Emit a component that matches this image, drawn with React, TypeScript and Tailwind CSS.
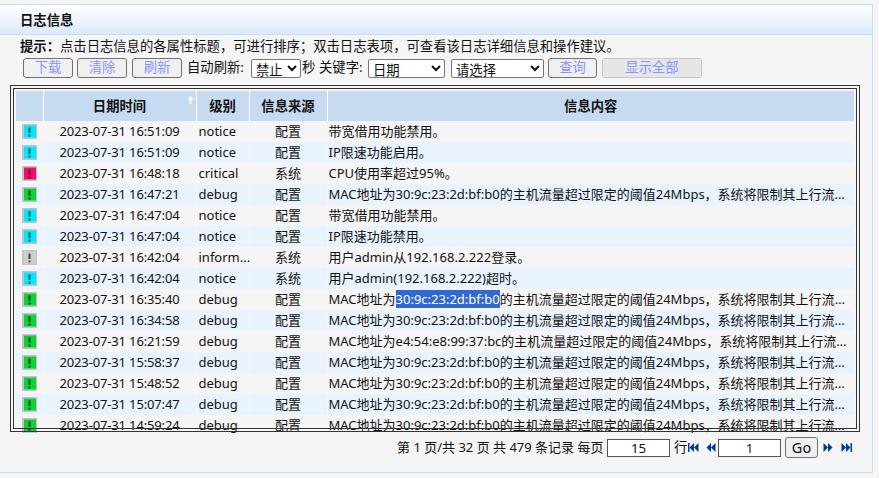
type Level = "notice" | "critical" | "debug" | "inform...";

const tileColors: Record<Level, { fill: string; mark: string }> = {
  notice: { fill: "#00e8fc", mark: "#04506a" },
  critical: { fill: "#f0106c", mark: "#66002e" },
  debug: { fill: "#10d038", mark: "#004a10" },
  "inform...": { fill: "#cfcfcf", mark: "#444444" },
};

const bw = "带宽借用功能禁用。";
const mac = (m: string) => `MAC地址为${m}的主机流量超过限定的阈值24Mbps，系统将限制其上行流量，并记录相关日志信息`;
const addr = "30:9c:23:2d:bf:b0";

const rows: { time: string; level: Level; source: string; text: string; sel?: boolean }[] = [
  { time: "2023-07-31 16:51:09", level: "notice", source: "配置", text: bw },
  { time: "2023-07-31 16:51:09", level: "notice", source: "配置", text: "IP限速功能启用。" },
  { time: "2023-07-31 16:48:18", level: "critical", source: "系统", text: "CPU使用率超过95%。" },
  { time: "2023-07-31 16:47:21", level: "debug", source: "配置", text: mac(addr) },
  { time: "2023-07-31 16:47:04", level: "notice", source: "配置", text: bw },
  { time: "2023-07-31 16:47:04", level: "notice", source: "配置", text: "IP限速功能禁用。" },
  { time: "2023-07-31 16:42:04", level: "inform...", source: "系统", text: "用户admin从192.168.2.222登录。" },
  { time: "2023-07-31 16:42:04", level: "notice", source: "系统", text: "用户admin(192.168.2.222)超时。" },
  { time: "2023-07-31 16:35:40", level: "debug", source: "配置", text: mac(addr), sel: true },
  { time: "2023-07-31 16:34:58", level: "debug", source: "配置", text: mac(addr) },
  { time: "2023-07-31 16:21:59", level: "debug", source: "配置", text: mac("e4:54:e8:99:37:bc") },
  { time: "2023-07-31 15:58:37", level: "debug", source: "配置", text: mac(addr) },
  { time: "2023-07-31 15:48:52", level: "debug", source: "配置", text: mac(addr) },
  { time: "2023-07-31 15:07:47", level: "debug", source: "配置", text: mac(addr) },
  { time: "2023-07-31 14:59:24", level: "debug", source: "配置", text: mac(addr) },
];

function LevelTile({ level }: { level: Level }) {
  const c = tileColors[level];
  return (
    <svg width="15" height="15" viewBox="0 0 15 15" className="block">
      <rect width="15" height="15" fill="#c4c4c4" />
      <rect x="2" y="1.5" width="12" height="12" fill={c.fill} />
      <rect x="6.5" y="3.5" width="2" height="5.5" fill={c.mark} />
      <rect x="6.5" y="10.5" width="2" height="2" fill={c.mark} />
    </svg>
  );
}

function ToolButton({ label, width, disabled }: { label: string; width: string; disabled?: boolean }) {
  return (
    <button
      className={`${width} h-[20px] rounded-[3px] border text-[#8496ff] ${
        disabled ? "border-[#c8c8c8] bg-[#e6e6e6]" : "border-[#707070] bg-[#f0f0f0]"
      }`}
    >
      {label}
    </button>
  );
}

function PagerArrow({ dir, bar }: { dir: "left" | "right"; bar?: boolean }) {
  return (
    <svg width="11" height="11" viewBox="0 0 11 11" className="block">
      {dir === "left" ? (
        <g fill="#003a9e">
          {bar && <rect x="0" y="1" width="1.5" height="9" />}
          <path d="M6 1v9L1.5 5.5zM10.5 1v9L6 5.5z" />
        </g>
      ) : (
        <g fill="#003a9e">
          <path d="M.5 1v9L5 5.5zM5 1v9l4.5-4.5z" />
          {bar && <rect x="9.5" y="1" width="1.5" height="9" />}
        </g>
      )}
    </svg>
  );
}

export default function App() {
  return (
    <div
      className="h-[478px] w-[879px] overflow-hidden bg-[#f5f5f5] pt-[4px] text-[13.33px] text-[#111]"
      style={{ fontFamily: '"Noto Sans", "Noto Sans CJK SC", sans-serif' }}
    >
      <div className="h-[469px] w-[873px] border-y border-r border-[#c4def5]">
        <div className="flex h-[30px] items-center border-b border-[#c4def5] bg-gradient-to-b from-[#ffffff] to-[#dce9fb] pl-[20px] pt-[2px] font-bold leading-none">
          日志信息
        </div>

        <p className="ml-[20px] mt-[1px] h-[20px] leading-[20px]">
          <b>提示：</b>点击日志信息的各属性标题，可进行排序；双击日志表项，可查看该日志详细信息和操作建议。
        </p>

        <div className="ml-[23px] mt-[2px] flex h-[20px] items-center leading-none">
          <ToolButton label="下载" width="w-[50px]" />
          <div className="ml-[4px]">
            <ToolButton label="清除" width="w-[50px]" />
          </div>
          <div className="ml-[5px]">
            <ToolButton label="刷新" width="w-[50px]" />
          </div>
          <span className="ml-[5px] w-[64px]">自动刷新:</span>
          <select className="h-[19px] w-[50px] rounded-[2px] border border-[#767676] bg-white">
            <option>禁止</option>
          </select>
          <span className="ml-[1px] w-[17px]">秒</span>
          <span className="w-[49px]">关键字:</span>
          <select className="h-[19px] w-[77px] rounded-[2px] border border-[#767676] bg-white">
            <option>日期</option>
          </select>
          <select className="ml-[6px] h-[19px] w-[93px] rounded-[2px] border border-[#767676] bg-white">
            <option>请选择</option>
          </select>
          <div className="ml-[4px]">
            <ToolButton label="查询" width="w-[49px]" />
          </div>
          <div className="ml-[5px]">
            <ToolButton label="显示全部" width="w-[100px]" disabled />
          </div>
        </div>

        <div className="relative ml-[16px] mt-[13px] h-[343px] w-[838px]">
          <div className="h-full overflow-hidden">
            <table className="w-[838px] table-fixed border-collapse">
              <colgroup>
                <col className="w-[27px]" />
                <col className="w-[153px]" />
                <col className="w-[53px]" />
                <col className="w-[78px]" />
                <col />
              </colgroup>
              <thead>
                <tr className="h-[30px] bg-[#c6dbf0] font-bold">
                  <th className="border-r border-white" />
                  <th className="relative border-r border-white pt-[1px]">
                    日期时间
                    <svg width="7" height="8" viewBox="0 0 7 8" className="absolute right-[2px] top-[5px]">
                      <path d="M3.5 0L6.5 3.5H4.3V8H2.7V3.5H.5z" fill="#fff" />
                    </svg>
                  </th>
                  <th className="border-r border-white pt-[1px]">级别</th>
                  <th className="border-r border-white pt-[1px]">信息来源</th>
                  <th className="pt-[1px]">信息内容</th>
                </tr>
              </thead>
              <tbody className="text-[13px]">
                {rows.map((r, i) => (
                  <tr key={i} className={`h-[21px] ${i % 2 === 1 ? "bg-[#e8f3fe]" : ""}`}>
                    <td className="border-r border-[#f5f5f5] p-0 pl-[6px]">
                      <LevelTile level={r.level} />
                    </td>
                    <td className="border-r border-[#f5f5f5] p-0 text-center tracking-[-0.15px]">{r.time}</td>
                    <td className="border-r border-[#f5f5f5] p-0 pl-[2px]">{r.level}</td>
                    <td className="border-r border-[#f5f5f5] p-0 text-center">{r.source}</td>
                    <td className="truncate p-0 pl-[1px] pr-[5px]">
                      {r.sel ? (
                        <>
                          MAC地址为<span className="bg-[#3367d1] text-white">{addr}</span>
                          {r.text.slice(6 + addr.length)}
                        </>
                      ) : (
                        r.text
                      )}
                    </td>
                  </tr>
                ))}
              </tbody>
            </table>
          </div>
          <div className="pointer-events-none absolute -left-[6px] -top-[6px] h-[347px] w-[850px] border border-[#333] p-[2px]">
            <div className="h-full w-full border border-[#333]" />
          </div>
        </div>

        <div className="ml-[397px] mt-[3px] flex h-[21px] items-center leading-none">
          <span className="w-[210px] whitespace-nowrap text-[13px]">第 1 页/共 32 页 共 479 条记录 每页</span>
          <input readOnly value="15" className="h-[18px] w-[63px] border border-[#555] bg-white text-center" />
          <span className="ml-[4px] w-[14px]">行</span>
          <PagerArrow dir="left" bar />
          <div className="ml-[6px]">
            <PagerArrow dir="left" />
          </div>
          <input readOnly value="1" className="ml-[2px] h-[18px] w-[63px] border border-[#555] bg-white text-center text-[#0a2a80]" />
          <button className="ml-[4px] h-[21px] w-[33px] rounded-[3px] border border-[#707070] bg-[#efefef] text-[14.5px]">Go</button>
          <div className="ml-[5px]">
            <PagerArrow dir="right" />
          </div>
          <div className="ml-[7px]">
            <PagerArrow dir="right" bar />
          </div>
        </div>
      </div>
    </div>
  );
}
